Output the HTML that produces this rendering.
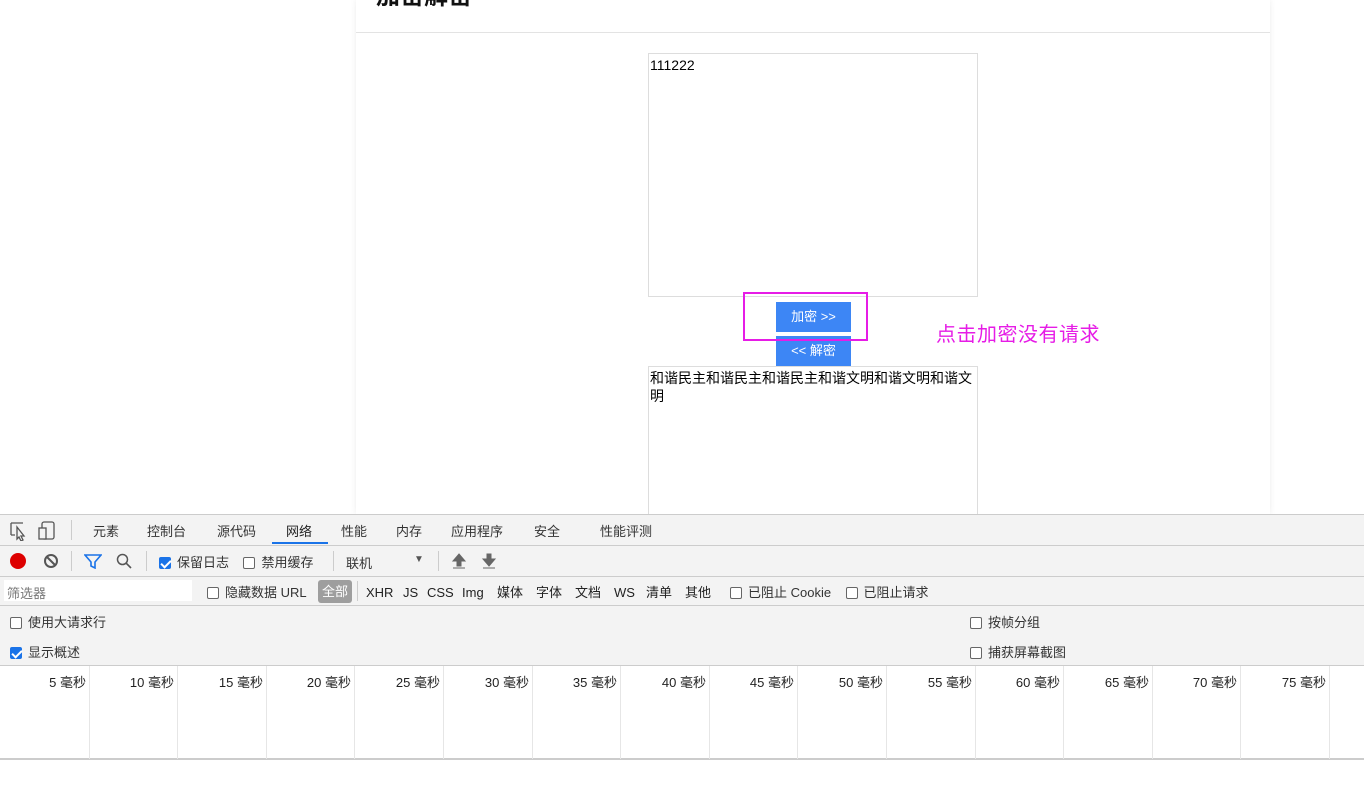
<!DOCTYPE html>
<html><head><meta charset="utf-8"><style>
*{margin:0;padding:0;box-sizing:border-box}
body{width:1364px;height:798px;overflow:hidden;background:#fff;font-family:"Liberation Sans","Noto Sans CJK SC",sans-serif;position:relative;font-size:13px;color:#333}
.a{position:absolute}
.card{left:356px;top:0;width:914px;height:514px;background:#fff;box-shadow:0 0 6px rgba(0,0,0,.08)}
.ta{border:1px solid #ddd;font-size:14px;color:#000;padding:2px 1px;line-height:18px}
.btn{background:#3d86f5;color:#fff;font-size:13px;text-align:center;line-height:30px}
.dt{left:0;top:514px;width:1364px;height:284px;background:#f3f3f3;border-top:1px solid #ccc}
.cb{display:inline-block;width:12px;height:12px;border:1px solid #666;border-radius:2px;background:#fff;vertical-align:-2px;margin-right:6px}
.cb.on{background:#1a73e8;border-color:#1a73e8;position:relative}
.cb.on:after{content:"";position:absolute;left:3px;top:0px;width:4px;height:8px;border:solid #fff;border-width:0 2px 2px 0;transform:rotate(45deg)}
.fr span{line-height:20px;height:20px;top:0}
</style></head><body>
<div class="a card"></div>
<div class="a" style="left:376px;top:-24px;font-size:24px;font-weight:bold;color:#111">加密解密</div>
<div class="a" style="left:356px;top:32px;width:914px;height:1px;background:#e3e3e3"></div>
<div class="a ta" style="left:648px;top:53px;width:330px;height:244px">111222</div>
<div class="a btn" style="left:776px;top:302px;width:75px">加密 &gt;&gt;</div>
<div class="a btn" style="left:776px;top:336px;width:75px;height:30px">&lt;&lt; 解密</div>
<div class="a" style="left:743px;top:292px;width:125px;height:49px;border:2px solid #e61ce6"></div>
<div class="a" style="left:936px;top:318px;font-size:20px;letter-spacing:0.5px;color:#e61ce6">点击加密没有请求</div>
<div class="a ta" style="left:648px;top:366px;width:330px;height:160px;border-bottom:none">和谐民主和谐民主和谐民主和谐文明和谐文明和谐文明</div>

<div class="a dt"></div>
<svg class="a" style="left:10px;top:521px" width="50" height="20"><path d="M1 2h12M1 2v12M1 14h4M7 6l7 9-3 0 2 4-2 1-2-4-2 2z" stroke="#555" fill="none" stroke-width="1.3"/><rect x="32" y="1" width="12" height="17" rx="2" stroke="#555" fill="none" stroke-width="1.3"/><rect x="29" y="7" width="7" height="11" stroke="#555" fill="#f3f3f3" stroke-width="1.3"/></svg>
<div class="a" style="left:71px;top:520px;width:1px;height:20px;background:#ccc"></div>
<div class="a" style="top:521px;left:0;font-size:13px;color:#333;white-space:nowrap">
<span class="a" style="left:93px">元素</span><span class="a" style="left:147px">控制台</span><span class="a" style="left:217px">源代码</span><span class="a" style="left:286px;color:#222">网络</span><span class="a" style="left:341px">性能</span><span class="a" style="left:396px">内存</span><span class="a" style="left:451px">应用程序</span><span class="a" style="left:534px">安全</span><span class="a" style="left:600px">性能评测</span></div>
<div class="a" style="left:272px;top:542px;width:56px;height:2px;background:#1a73e8"></div>
<div class="a" style="left:0;top:545px;width:1364px;height:1px;background:#ccc"></div>
<div class="a" style="left:10px;top:553px;width:16px;height:16px;border-radius:50%;background:#d00"></div>
<svg class="a" style="left:43px;top:553px" width="16" height="16"><circle cx="8" cy="8" r="6" stroke="#555" stroke-width="2" fill="none"/><path d="M4 4l8 8" stroke="#555" stroke-width="2"/></svg>
<div class="a" style="left:71px;top:551px;width:1px;height:20px;background:#ccc"></div>
<svg class="a" style="left:84px;top:553px" width="18" height="16"><path d="M1 2h16l-6 7v6l-4-2v-4z" stroke="#1a73e8" stroke-width="1.6" fill="none"/></svg>
<svg class="a" style="left:116px;top:553px" width="16" height="16"><circle cx="6.5" cy="6.5" r="5" stroke="#555" stroke-width="1.5" fill="none"/><path d="M10 10l5 5" stroke="#555" stroke-width="1.6"/></svg>
<div class="a" style="left:146px;top:551px;width:1px;height:20px;background:#ccc"></div>
<div class="a" style="left:159px;top:552px;white-space:nowrap"><span class="cb on"></span>保留日志&nbsp;&nbsp;&nbsp;&nbsp;<span class="cb"></span>禁用缓存</div>
<div class="a" style="left:333px;top:551px;width:1px;height:20px;background:#ccc"></div>
<div class="a" style="left:346px;top:553px">联机</div>
<div class="a" style="left:414px;top:554px;font-size:10px;color:#555">▼</div>
<div class="a" style="left:438px;top:551px;width:1px;height:20px;background:#ccc"></div>
<svg class="a" style="left:451px;top:552px" width="50" height="18"><path d="M8 2l6 7h-4v5h-4v-5h-4z M2 16h12" fill="#666" stroke="#666" stroke-width="1"/><path d="M38 14l6-7h-4v-5h-4v5h-4z M32 16h12" fill="#666" stroke="#666" stroke-width="1"/></svg>
<div class="a" style="left:0;top:576px;width:1364px;height:1px;background:#ccc"></div>
<div class="a" style="left:4px;top:580px;width:188px;height:21px;background:#fff;color:#777;padding:3px 3px;font-size:13px">筛选器</div>
<div class="a" style="left:207px;top:582px;white-space:nowrap"><span class="cb"></span>隐藏数据 URL</div>
<div class="a" style="left:318px;top:580px;width:34px;height:23px;border-radius:3px;background:#9e9e9e;color:#fff;text-align:center;line-height:23px">全部</div>
<div class="a" style="left:357px;top:581px;width:1px;height:20px;background:#ccc"></div>
<div class="a fr" style="top:583px;left:0;white-space:nowrap;color:#222">
<span class="a" style="left:366px">XHR</span><span class="a" style="left:403px">JS</span><span class="a" style="left:427px">CSS</span><span class="a" style="left:462px">Img</span><span class="a" style="left:497px">媒体</span><span class="a" style="left:536px">字体</span><span class="a" style="left:575px">文档</span><span class="a" style="left:614px">WS</span><span class="a" style="left:646px">清单</span><span class="a" style="left:685px">其他</span></div>
<div class="a" style="left:730px;top:582px;white-space:nowrap"><span class="cb"></span>已阻止 Cookie&nbsp;&nbsp;&nbsp;&nbsp;<span class="cb"></span>已阻止请求</div>
<div class="a" style="left:0;top:605px;width:1364px;height:1px;background:#ccc"></div>
<div class="a" style="left:10px;top:612px"><span class="cb"></span>使用大请求行</div>
<div class="a" style="left:10px;top:642px"><span class="cb on"></span>显示概述</div>
<div class="a" style="left:970px;top:612px"><span class="cb"></span>按帧分组</div>
<div class="a" style="left:970px;top:642px"><span class="cb"></span>捕获屏幕截图</div>
<div class="a" style="left:0;top:665px;width:1364px;height:95px;background:#fff;border-top:1px solid #ccc;border-bottom:2px solid #ccc"></div>
<div class="a" style="left:0;top:760px;width:1364px;height:38px;background:#fff"></div>
<div id="tl"></div>
<script>
var h="";for(var i=1;i<=15;i++){var x=Math.round(i*88.6);h+='<div class="a" style="left:'+x+'px;top:666px;width:1px;height:93px;background:#e6e6e6"></div><div class="a" style="left:'+(x-83)+'px;top:672px;width:80px;text-align:right;font-size:13px;color:#222">'+(i*5)+' 毫秒</div>';}
document.getElementById("tl").outerHTML=h;
</script>
</body></html>
